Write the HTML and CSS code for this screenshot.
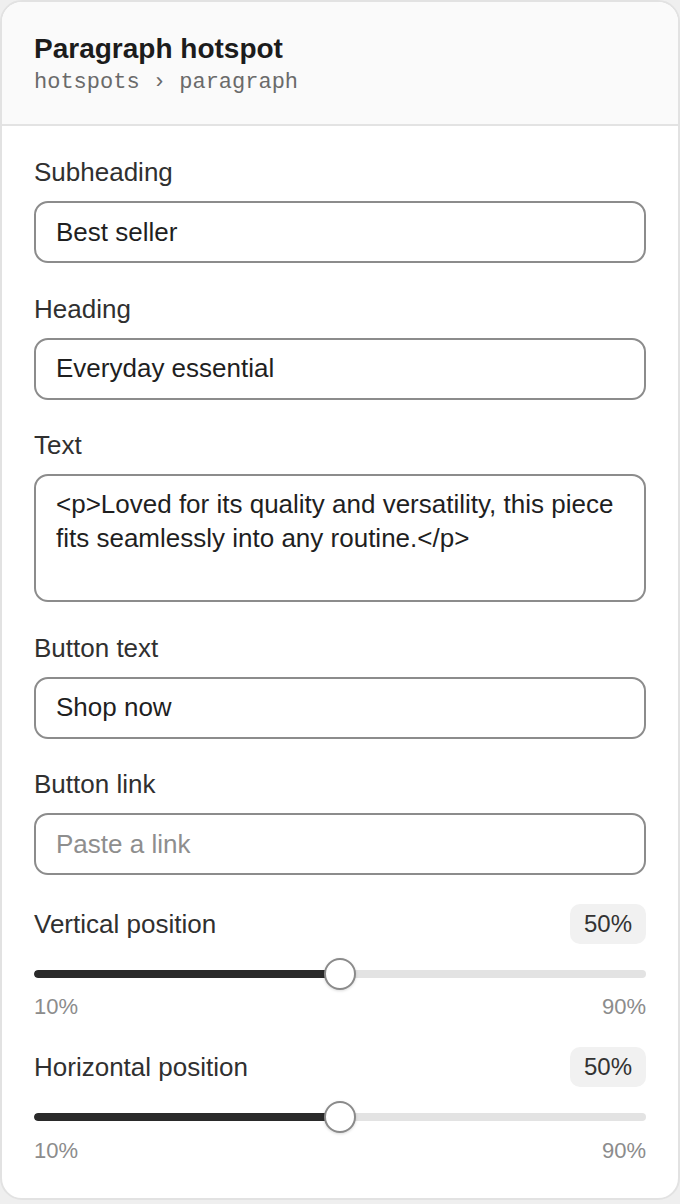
FILE: index.html
```html
<!DOCTYPE html>
<html lang="en">
<head>
<meta charset="utf-8">
<title>Paragraph hotspot</title>
<link rel="stylesheet" href="styles.css">
</head>
<body>
<div class="card">
  <header class="card-header">
    <h1 class="title">Paragraph hotspot</h1>
    <div class="crumbs">hotspots › paragraph</div>
  </header>
  <div class="card-body">
    <div class="field">
      <label class="label">Subheading</label>
      <input class="input" type="text" value="Best seller">
    </div>
    <div class="field">
      <label class="label">Heading</label>
      <input class="input" type="text" value="Everyday essential">
    </div>
    <div class="field">
      <label class="label">Text</label>
      <textarea class="input textarea">&lt;p&gt;Loved for its quality and versatility, this piece fits seamlessly into any routine.&lt;/p&gt;</textarea>
    </div>
    <div class="field">
      <label class="label">Button text</label>
      <input class="input" type="text" value="Shop now">
    </div>
    <div class="field">
      <label class="label">Button link</label>
      <input class="input" type="text" placeholder="Paste a link">
    </div>
    <div class="field">
      <div class="range-head">
        <span class="label">Vertical position</span>
        <span class="badge">50%</span>
      </div>
      <div class="slider">
        <div class="track"><div class="fill" style="width:50%"></div></div>
        <div class="thumb" style="left:50%"></div>
      </div>
      <div class="range-scale"><span>10%</span><span>90%</span></div>
    </div>
    <div class="field">
      <div class="range-head">
        <span class="label">Horizontal position</span>
        <span class="badge">50%</span>
      </div>
      <div class="slider">
        <div class="track"><div class="fill" style="width:50%"></div></div>
        <div class="thumb" style="left:50%"></div>
      </div>
      <div class="range-scale"><span>10%</span><span>90%</span></div>
    </div>
  </div>
</div>
</body>
</html>
```

FILE: styles.css
```css
* { box-sizing: border-box; }

html, body {
  margin: 0;
  padding: 0;
  background: #efefef;
}

body {
  font-family: "Liberation Sans", Arial, sans-serif;
  color: #2f2f2f;
}

.card {
  width: 680px;
  background: #ffffff;
  border: 2px solid #e2e2e2;
  border-radius: 22px;
  overflow: hidden;
}

.card-header {
  background: #fafafa;
  border-bottom: 2px solid #e3e3e3;
  padding: 30px 32px 27px;
}

.title {
  margin: 0;
  font-size: 28px;
  line-height: 34px;
  font-weight: 700;
  color: #1c1c1c;
}

.crumbs {
  margin-top: 3px;
  font-family: "Liberation Mono", "Courier New", monospace;
  font-size: 22px;
  line-height: 28px;
  color: #6a6a6a;
}

.card-body {
  padding: 29px 32px 36px;
  display: flex;
  flex-direction: column;
  gap: 28.6px;
}

.field {
  display: flex;
  flex-direction: column;
}

.label {
  font-size: 26px;
  line-height: 34px;
  color: #303030;
  margin-bottom: 12px;
}

.input {
  display: block;
  width: 100%;
  height: 62px;
  border: 2px solid #8c8c8c;
  border-radius: 14px;
  padding: 12px 20px;
  font-family: "Liberation Sans", Arial, sans-serif;
  font-size: 26px;
  line-height: 1.3;
  color: #1f1f1f;
  background: #fff;
  outline: none;
}

.input::placeholder {
  color: #8e8e8e;
}

.textarea {
  height: 128px;
  resize: none;
  overflow: hidden;
  line-height: 33.5px;
  padding-top: 12px;
}

.range-head {
  display: flex;
  justify-content: space-between;
  align-items: center;
  height: 40px;
}

.range-head .label {
  margin-bottom: 0;
}

.badge {
  background: #f1f1f1;
  border-radius: 10px;
  padding: 4px 14px;
  font-size: 24px;
  line-height: 32px;
  color: #333;
}

.slider {
  position: relative;
  height: 32px;
  margin-top: 14px;
  display: flex;
  align-items: center;
}

.track {
  width: 100%;
  height: 8px;
  border-radius: 4px;
  background: #e3e3e3;
  overflow: hidden;
}

.fill {
  height: 100%;
  background: #2a2a2a;
  border-radius: 4px 0 0 4px;
}

.thumb {
  position: absolute;
  top: 0;
  width: 32px;
  height: 32px;
  margin-left: -16px;
  border-radius: 50%;
  background: #fff;
  border: 2px solid #8a8a8a;
  box-shadow: 0 1px 3px rgba(0, 0, 0, 0.15);
}

.range-scale {
  display: flex;
  justify-content: space-between;
  margin-top: 5.5px;
  font-size: 22px;
  line-height: 23px;
  color: #8c8c8c;
}
```
